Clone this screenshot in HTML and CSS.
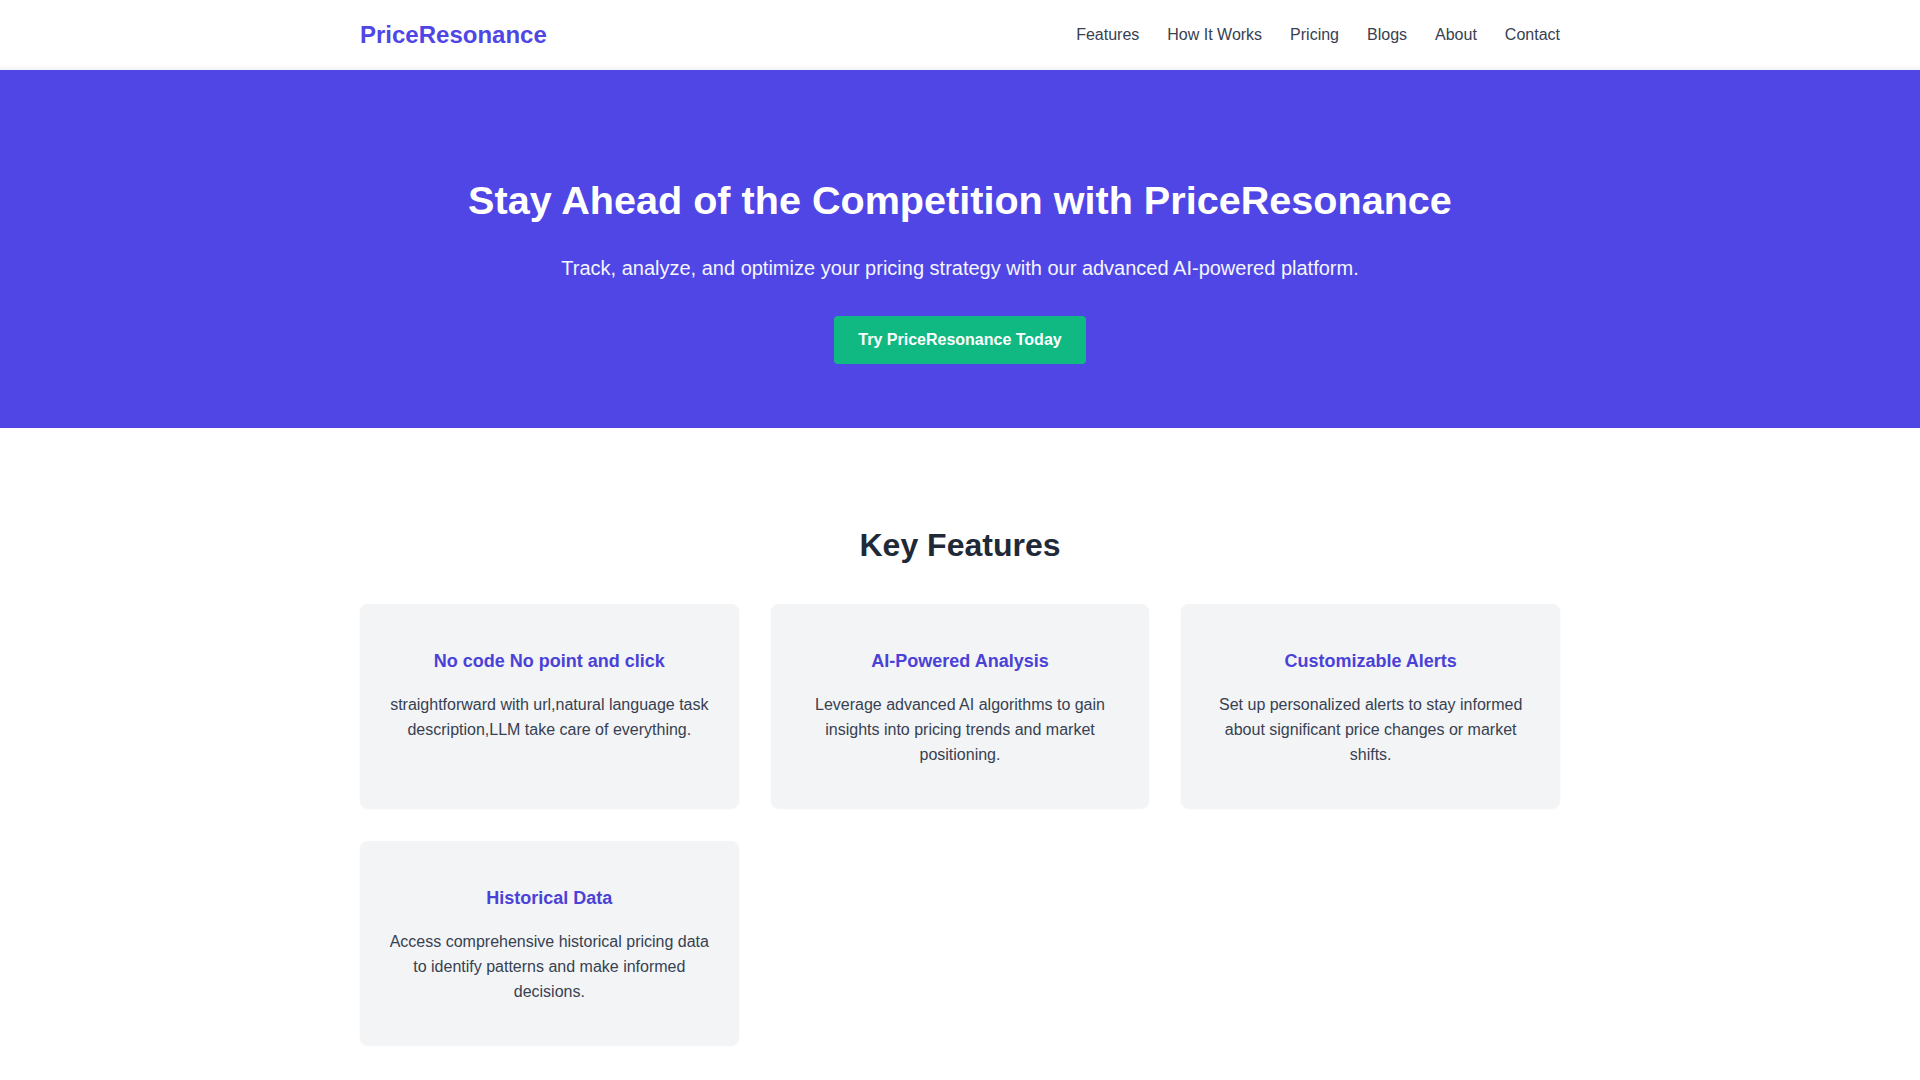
FILE: index.html
```html
<!DOCTYPE html>
<html lang="en">
<head>
  <meta charset="UTF-8">
  <meta name="viewport" content="width=device-width, initial-scale=1.0">
  <title>PriceResonance</title>
  <link rel="stylesheet" href="styles.css">
</head>
<body>

  <header class="site-header">
    <div class="container header-inner">
      <a class="logo" href="#">PriceResonance</a>
      <nav class="nav">
        <a href="#features">Features</a>
        <a href="#how">How It Works</a>
        <a href="#pricing">Pricing</a>
        <a href="#blogs">Blogs</a>
        <a href="#about">About</a>
        <a href="#contact">Contact</a>
      </nav>
    </div>
  </header>

  <!-- hero -->
  <section class="hero">
    <div class="container">
      <h1>Stay Ahead of the Competition with PriceResonance</h1>
      <p>Track, analyze, and optimize your pricing strategy with our advanced AI-powered platform.</p>
      <a class="cta" href="#">Try PriceResonance Today</a>
    </div>
  </section>

  <!-- features -->
  <section class="features" id="features">
    <div class="container">
      <h2>Key Features</h2>
      <div class="feature-grid">
        <div class="feature-card">
          <h3>No code No point and click</h3>
          <p>straightforward with url,natural language task description,LLM take care of everything.</p>
        </div>
        <div class="feature-card">
          <h3>AI-Powered Analysis</h3>
          <p>Leverage advanced AI algorithms to gain insights into pricing trends and market positioning.</p>
        </div>
        <div class="feature-card">
          <h3>Customizable Alerts</h3>
          <p>Set up personalized alerts to stay informed about significant price changes or market shifts.</p>
        </div>
        <div class="feature-card">
          <h3>Historical Data</h3>
          <p>Access comprehensive historical pricing data to identify patterns and make informed decisions.</p>
        </div>
      </div>
    </div>
  </section>

</body>
</html>
```

FILE: styles.css
```css
* {
  box-sizing: border-box;
}

body {
  margin: 0;
  font-family: "Liberation Sans", Arial, sans-serif;
  color: #1f2937;
  background-color: #ffffff;
}

a {
  text-decoration: none;
}

.container {
  width: 1200px;
  margin: 0 auto;
}

/* top bar */
.site-header {
  height: 70px;
  background-color: #ffffff;
  box-shadow: inset 0 -4px 4px -2px rgba(0, 0, 0, 0.06);
}

.header-inner {
  height: 100%;
  display: flex;
  align-items: center;
  justify-content: space-between;
}

.logo {
  font-size: 24px;
  font-weight: bold;
  color: #4f46e5;
}

.nav {
  display: flex;
  gap: 28px;
}

.nav a {
  font-size: 16px;
  color: #374151;
}

/* hero */
.hero {
  background-color: #4f46e5;
  color: #ffffff;
  text-align: center;
  padding: 106px 0 64px;
}

.hero h1 {
  margin: 0 0 30px;
  font-size: 39.6px;
  line-height: 48px;
  font-weight: bold;
}

.hero p {
  margin: 0 0 34px;
  font-size: 20px;
  line-height: 28px;
  color: #f5f5ff;
}

.cta {
  display: inline-block;
  background-color: #10b981;
  color: #ffffff;
  font-size: 16px;
  font-weight: bold;
  line-height: 24px;
  padding: 12px 24px;
  border-radius: 4px;
}

/* features */
.features {
  padding: 97px 0 96px;
}

.features h2 {
  margin: 0 0 39px;
  text-align: center;
  font-size: 32px;
  line-height: 40px;
  color: #1f2937;
}

.feature-grid {
  display: grid;
  grid-template-columns: repeat(3, 1fr);
  gap: 33px 32px;
}

.feature-card {
  background-color: #f3f4f6;
  border-radius: 8px;
  padding: 43px 24px 41px;
  text-align: center;
  box-shadow: 0 1px 2px rgba(0, 0, 0, 0.05);
}

.feature-card h3 {
  margin: 0 0 17px;
  font-size: 18px;
  line-height: 28px;
  color: #4a42d6;
}

.feature-card p {
  margin: 0;
  font-size: 16px;
  line-height: 25px;
  color: #374151;
}
```
